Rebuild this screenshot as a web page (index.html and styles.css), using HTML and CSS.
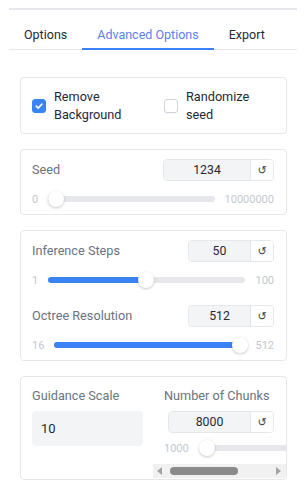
FILE: index.html
```html
<!DOCTYPE html>
<html>
<head>
<meta charset="utf-8">
<link rel="stylesheet" href="styles.css">
</head>
<body>
<div class="panel">
  <div class="tabs">
    <button class="tab">Options</button>
    <button class="tab active">Advanced Options</button>
    <button class="tab">Export</button>
  </div>
  <div class="content">
    <div class="card checks">
      <label class="check">
        <span class="box on"><svg width="10" height="10" viewBox="0 0 10 10"><path d="M2.2 5.2 L4.2 7.1 L7.9 3.1" fill="none" stroke="#fff" stroke-width="1.6" stroke-linecap="round" stroke-linejoin="round"/></svg></span>
        <span class="check-text">Remove Background</span>
      </label>
      <label class="check">
        <span class="box"></span>
        <span class="check-text">Randomize seed</span>
      </label>
    </div>

    <div class="card field-card">
      <div class="head">
        <span class="label">Seed</span>
        <div class="numgroup w-seed"><span class="num">1234</span><span class="reset">↺</span></div>
      </div>
      <div class="slider">
        <span class="minmax">0</span>
        <div class="track"><div class="fill" style="width:8px"></div><span class="thumb" style="left:0px"></span></div>
        <span class="minmax">10000000</span>
      </div>
    </div>

    <div class="card field-card">
      <div class="head">
        <span class="label">Inference Steps</span>
        <div class="numgroup w-small"><span class="num">50</span><span class="reset">↺</span></div>
      </div>
      <div class="slider">
        <span class="minmax">1</span>
        <div class="track"><div class="fill" style="width:98px"></div><span class="thumb" style="left:90px"></span></div>
        <span class="minmax">100</span>
      </div>
      <div class="head second">
        <span class="label">Octree Resolution</span>
        <div class="numgroup w-small"><span class="num">512</span><span class="reset">↺</span></div>
      </div>
      <div class="slider">
        <span class="minmax">16</span>
        <div class="track"><div class="fill" style="width:186px"></div><span class="thumb" style="left:178px"></span></div>
        <span class="minmax">512</span>
      </div>
    </div>

    <div class="card split">
      <div class="left">
        <span class="label">Guidance Scale</span>
        <div class="textbox">10</div>
      </div>
      <div class="right">
        <div class="scroll-inner">
          <span class="label">Number of Chunks</span>
          <div class="numgroup w-chunks"><span class="num">8000</span><span class="reset">↺</span></div>
          <div class="slider wide">
            <span class="minmax">1000</span>
            <div class="track"><div class="fill" style="width:0px"></div><span class="thumb" style="left:0px"></span></div>
          </div>
        </div>
        <div class="scrollbar">
          <span class="arrow left-arrow"></span>
          <span class="sb-thumb"></span>
          <span class="arrow right-arrow"></span>
        </div>
      </div>
    </div>
  </div>
</div>
</body>
</html>
```

FILE: styles.css
```css
* { box-sizing: border-box; }
body {
  margin: 0;
  background: #fff;
  font-family: Roboto, "Noto Sans", sans-serif;
  font-size: 12.7px;
  color: #1f2937;
}
.panel {
  margin: 8px 8px 0 9px;
  border-top: 2px solid #e5e7eb;
}
.tabs {
  display: flex;
  height: 40px;
  border-bottom: 1px solid #e5e7eb;
}
.tab {
  border: 0;
  background: none;
  font: inherit;
  font-size: 12.5px;
  color: #1f2937;
  padding: 10px 15px 0 15px;
  margin-bottom: -1px;
  border-bottom: 2px solid transparent;
  cursor: pointer;
}
.tab.active {
  color: #5a7ff2;
  border-bottom-color: #3b82f6;
}
.content {
  padding: 27px 10px 16px 11px;
  display: flex;
  flex-direction: column;
  gap: 15px;
}
.card {
  border: 1px solid #e5e7eb;
  border-radius: 4px;
  background: #fff;
}
.checks {
  display: grid;
  grid-template-columns: 132px 1fr;
  padding: 10px 12px 9px 11px;
}
.check {
  display: flex;
  align-items: center;
  gap: 8px;
  line-height: 18px;
}
.box {
  flex: none;
  width: 14px;
  height: 14px;
  border-radius: 3px;
  border: 1px solid #d1d5db;
  background: #fff;
  display: flex;
  align-items: center;
  justify-content: center;
  box-shadow: 0 1px 1px rgba(0,0,0,0.04);
}
.box.on {
  background: #3b82f6;
  border-color: #3b82f6;
}
.field-card {
  padding: 9px 12px 7px 11px;
}
.head {
  display: flex;
  justify-content: space-between;
  align-items: center;
  height: 22px;
}
.head.second { margin-top: 17px; }
.label {
  color: #6b7280;
  font-size: 12.7px;
  line-height: 18px;
}
.numgroup {
  display: flex;
  height: 22px;
  border: 1px solid #e5e7eb;
  border-radius: 4px;
  overflow: hidden;
}
.w-seed { width: 111px; }
.w-small { width: 86px; }
.w-chunks { width: 106px; margin-left: 4px; margin-top: 6px; }
.num {
  flex: 1;
  background: #f3f4f6;
  display: flex;
  align-items: center;
  justify-content: center;
  font-size: 12.3px;
  color: #1f2937;
}
.reset {
  width: 23px;
  flex: none;
  border-left: 1px solid #e5e7eb;
  background: #fff;
  display: flex;
  align-items: center;
  justify-content: center;
  font-family: "DejaVu Sans", sans-serif;
  font-size: 11px;
  color: #374151;
}
.slider {
  display: flex;
  align-items: center;
  gap: 10px;
  height: 16px;
  margin-top: 10px;
}
.minmax {
  font-size: 11px;
  color: #c4c8ce;
}
.track {
  position: relative;
  flex: 1;
  height: 6px;
  border-radius: 3px;
  background: #e5e7eb;
}
.fill {
  height: 6px;
  border-radius: 3px;
  background: #3b82f6;
}
.thumb {
  position: absolute;
  top: -5px;
  width: 16px;
  height: 16px;
  border-radius: 50%;
  background: #fff;
  box-shadow: 0 1px 3px rgba(0,0,0,0.22);
}
.split {
  display: grid;
  grid-template-columns: 132px 1fr;
  height: 104px;
  overflow: hidden;
}
.left {
  padding: 10px 10px 0 11px;
  display: flex;
  flex-direction: column;
  gap: 6px;
}
.textbox {
  height: 35px;
  background: #f3f4f6;
  border-radius: 4px;
  padding: 0 9px;
  display: flex;
  align-items: center;
  font-size: 13px;
  color: #1f2937;
}
.right {
  display: flex;
  flex-direction: column;
  overflow: hidden;
  min-width: 0;
}
.scroll-inner {
  padding: 10px 0 0 11px;
  width: 260px;
}
.scroll-inner .label { white-space: nowrap; display: block; }
.slider.wide { margin-top: 7px; }
.scrollbar {
  margin-top: auto;
  height: 14px;
  background: #f1f1f1;
  display: flex;
  align-items: center;
  padding: 0 5px 0 4px;
  margin-bottom: 1px;
}
.arrow {
  width: 0;
  height: 0;
  border-top: 4px solid transparent;
  border-bottom: 4px solid transparent;
}
.left-arrow { border-right: 5px solid #a3a3a3; }
.right-arrow { border-left: 5px solid #a3a3a3; margin-left: auto; }
.sb-thumb {
  width: 68px;
  height: 8px;
  border-radius: 4px;
  background: #8b8b8b;
  margin-left: 8px;
}
```
